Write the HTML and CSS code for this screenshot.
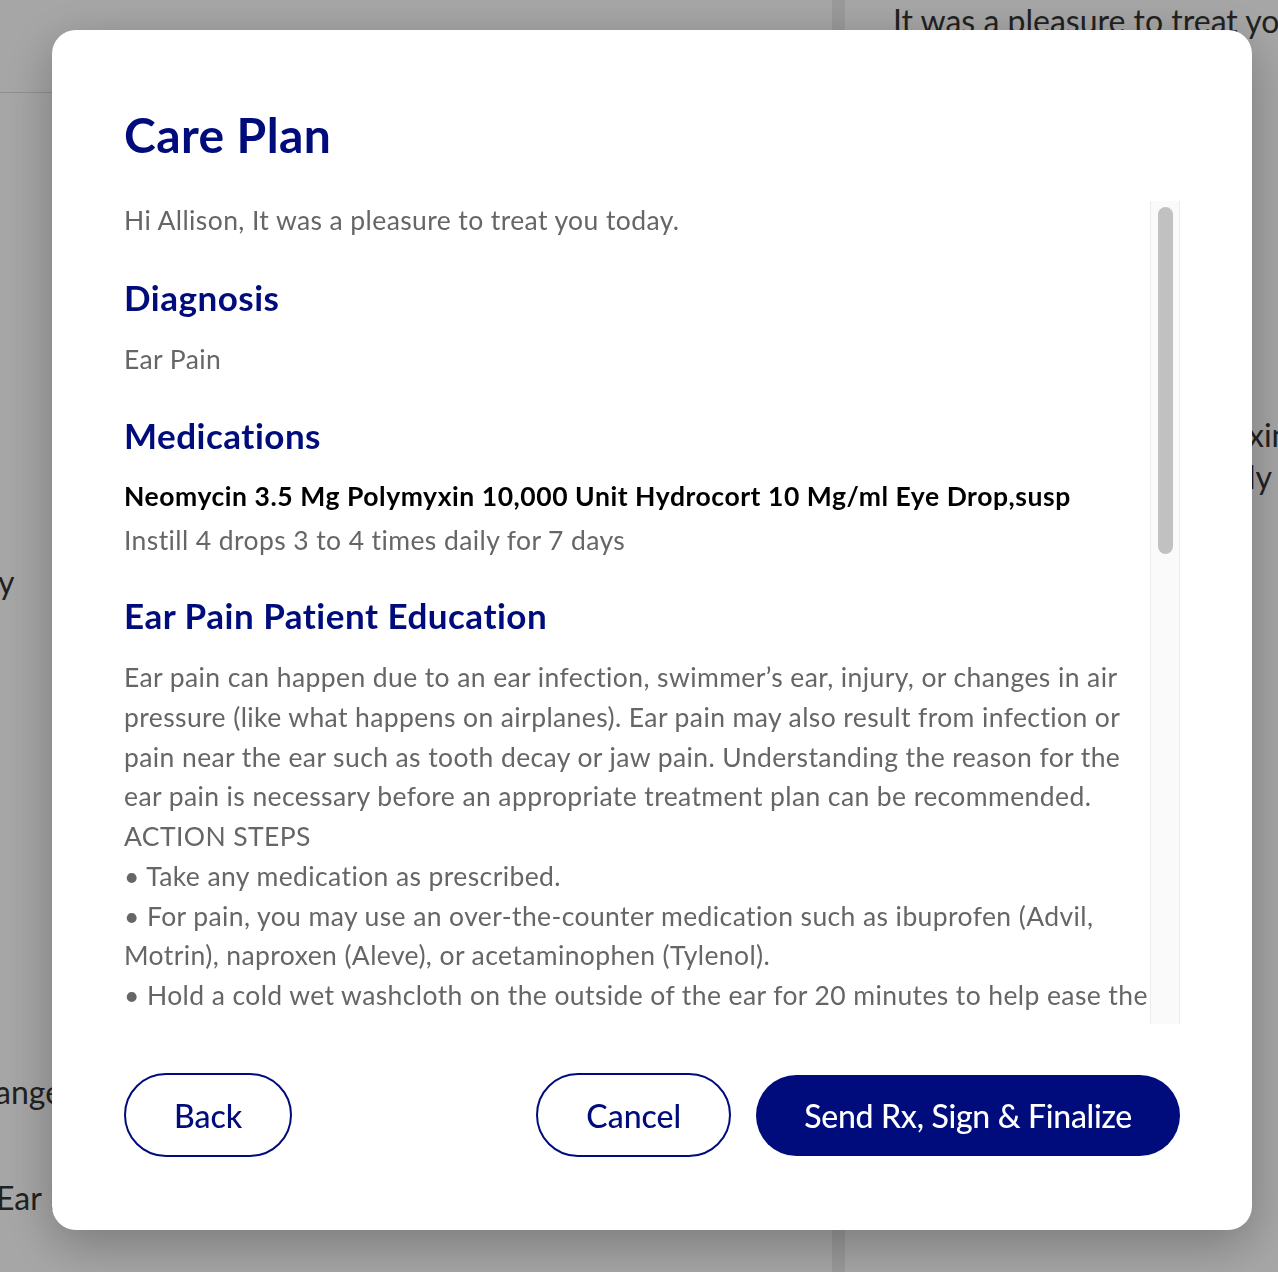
FILE: index.html
```html
<!DOCTYPE html>
<html lang="en">
<head>
<meta charset="utf-8">
<title>Care Plan</title>
<link rel="stylesheet" href="styles.css">
</head>
<body>
<div class="page">
  <div class="bg-left">
    <div class="bg-header"></div>
    <div class="bg-line bg-y">y</div>
    <div class="bg-line bg-ange">ange</div>
    <div class="bg-heading">Ear Pain</div>
  </div>
  <div class="bg-divider"></div>
  <div class="bg-right">
    <div class="bg-line bg-top">It was a pleasure to treat you today.</div>
    <div class="bg-line bg-frag bg-xin">xin 10,000 Unit</div>
    <div class="bg-line bg-frag bg-ly">ly for 7 days</div>
  </div>
</div>

<div class="overlay">
  <div class="modal" role="dialog" aria-labelledby="modal-title">
    <h1 class="modal-title" id="modal-title">Care Plan</h1>
    <div class="scroll-area">
      <div class="scroll-content">
        <p class="text">Hi Allison, It was a pleasure to treat you today.</p>

        <h2 class="section-title">Diagnosis</h2>
        <p class="text">Ear Pain</p>

        <h2 class="section-title section-title--meds">Medications</h2>
        <p class="med-name">Neomycin 3.5 Mg Polymyxin 10,000 Unit Hydrocort 10 Mg/ml Eye Drop,susp</p>
        <p class="text med-sig">Instill 4 drops 3 to 4 times daily for 7 days</p>

        <h2 class="section-title section-title--edu">Ear Pain Patient Education</h2>
        <p class="text edu">Ear pain can happen due to an ear infection, swimmer’s ear, injury, or changes in air pressure (like what happens on airplanes). Ear pain may also result from infection or pain near the ear such as tooth decay or jaw pain. Understanding the reason for the ear pain is necessary before an appropriate treatment plan can be recommended.
ACTION STEPS
• Take any medication as prescribed.
• For pain, you may use an over-the-counter medication such as ibuprofen (Advil, Motrin), naproxen (Aleve), or acetaminophen (Tylenol).
• Hold a cold wet washcloth on the outside of the ear for 20 minutes to help ease the pain. You may also try a warm compress if that feels better.
• Sleep with the painful ear facing up, raised on a pillow, to help drain fluid and reduce pressure.
• Chewing gum or yawning may help relieve ear pain caused by pressure changes, such as during a flight.
• Do not put anything inside the ear, including cotton swabs, oils, or drops, unless they were prescribed by your provider.
WHEN TO SEEK CARE
• A fever of 102°F (38.9°C) or higher.
• Fluid, pus, or blood draining from the ear.
• Severe pain that does not improve with medication.
• Swelling, redness, or tenderness behind the ear.</p>
      </div>
      <div class="scrollbar" aria-hidden="true">
        <div class="scrollbar-thumb"></div>
      </div>
    </div>
    <div class="actions">
      <button class="btn btn-outline btn-back" type="button">Back</button>
      <button class="btn btn-outline" type="button">Cancel</button>
      <button class="btn btn-primary" type="button">Send Rx, Sign &amp; Finalize</button>
    </div>
  </div>
</div>
</body>
</html>
```
FILE: styles.css
```css
* { box-sizing: border-box; }

html, body {
  margin: 0;
  padding: 0;
}

body {
  font-family: Lato, "Open Sans", "Liberation Sans", sans-serif;
  width: 1278px;
  height: 1272px;
  overflow: hidden;
  background: #ffffff;
}

/* ---------- background page ---------- */
.page {
  display: flex;
  height: 1272px;
  overflow: hidden;
  background: #ffffff;
  color: #333333;
}

.bg-left {
  width: 832px;
  flex: none;
  overflow: hidden;
}

.bg-header {
  height: 93px;
  border-bottom: 1px solid #dcdcdc;
}

.bg-line {
  font-size: 32px;
  line-height: 36px;
  white-space: nowrap;
}

.bg-y {
  margin-top: 471px;
  margin-left: -2px;
}

.bg-ange {
  margin-top: 474px;
  margin-left: -5px;
}

.bg-heading {
  margin-top: 66px;
  margin-left: -4px;
  font-size: 32px;
  line-height: 44px;
  white-space: nowrap;
}

.bg-divider {
  width: 13px;
  flex: none;
  background: #ececec;
}

.bg-right {
  flex: 1;
  min-width: 0;
  overflow: hidden;
  padding-left: 48px;
}

.bg-top {
  margin-top: 3px;
}

.bg-frag {
  padding-left: 355px;
}

.bg-xin {
  margin-top: 378px;
}

.bg-ly {
  margin-top: 6px;
}

/* ---------- overlay + modal ---------- */
.overlay {
  position: fixed;
  inset: 0;
  background: rgba(0, 0, 0, 0.35);
  display: flex;
  align-items: flex-start;
  padding: 30px 26px 42px 52px;
}

.modal {
  width: 1200px;
  height: 1200px;
  background: #ffffff;
  border-radius: 24px;
  box-shadow: 0 14px 50px rgba(0, 0, 0, 0.28);
  padding: 76px 72px 73px 72px;
  display: flex;
  flex-direction: column;
}

.modal-title {
  margin: 0;
  font-size: 48px;
  line-height: 58px;
  font-weight: 700;
  letter-spacing: 0.4px;
  color: #000c7b;
}

.scroll-area {
  margin-top: 37px;
  height: 823px;
  flex: none;
  display: flex;
}

.scroll-content {
  flex: 1;
  min-width: 0;
  overflow: hidden;
}

.scrollbar {
  width: 30px;
  flex: none;
  background: #fafafa;
  border-left: 1px solid #ececec;
  border-right: 1px solid #ececec;
  padding: 6px 6px 0 7px;
}

.scrollbar-thumb {
  height: 347px;
  background: #c1c1c1;
  border-radius: 8px;
}

.text {
  margin: 0;
  font-size: 26.5px;
  line-height: 39.75px;
  letter-spacing: 0.4px;
  color: #666666;
}

.edu {
  white-space: pre-line;
}

.section-title {
  margin: 36px 0 22px 0;
  font-size: 35px;
  line-height: 41px;
  font-weight: 700;
  letter-spacing: 0.5px;
  color: #000c7b;
}

.section-title--meds {
  margin-top: 35px;
  margin-bottom: 21px;
}

.section-title--edu {
  margin-top: 34px;
}

.med-name {
  margin: 0;
  font-size: 26.5px;
  line-height: 39.75px;
  font-weight: 700;
  letter-spacing: 0.55px;
  color: #000000;
}

.med-sig {
  margin-top: 5px;
}

/* ---------- buttons ---------- */
.actions {
  margin-top: 49px;
  display: flex;
  align-items: center;
  gap: 25px;
}

.btn {
  font-family: inherit;
  font-size: 32px;
  font-weight: 500;
  border-radius: 42px;
  padding: 0 48px;
  cursor: pointer;
  white-space: nowrap;
}

.btn-outline {
  height: 84px;
  background: #ffffff;
  color: #000c7b;
  border: 2px solid #000c7b;
}

.btn-back {
  margin-right: auto;
}

.btn-primary {
  height: 81px;
  background: #000c7b;
  color: #ffffff;
  border: none;
  letter-spacing: -0.3px;
}
```
